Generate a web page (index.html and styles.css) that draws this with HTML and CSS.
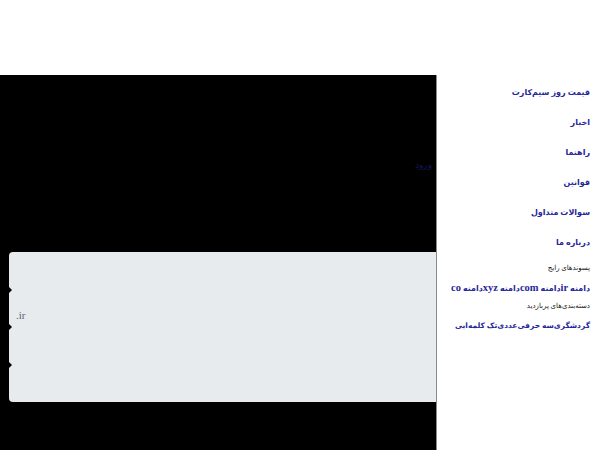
FILE: index.html
```html
<!DOCTYPE html>
<html lang="fa">
<head>
<meta charset="utf-8">
<link rel="stylesheet" href="styles.css">
</head>
<body>
<div class="top"></div>
<div class="layout">
  <div class="main">
    <div class="ghost">ورود</div>
    <div class="box">
      <div class="row"></div>
      <div class="row notch"><span class="ext">.ir</span></div>
      <div class="row notch"></div>
      <div class="row notch"></div>
    </div>
  </div>
  <aside class="side">
    <nav class="menu">
      <a class="link">قیمت روز سیم‌کارت</a>
      <a class="link">اخبار</a>
      <a class="link">راهنما</a>
      <a class="link">قوانین</a>
      <a class="link">سوالات متداول</a>
      <a class="link">درباره ما</a>
    </nav>
    <div class="group">
      <div class="label">پسوندهای رایج</div>
      <div class="tags">دامنه <span class="lat">ir</span>‌دامنه <span class="lat">com</span>‌دامنه <span class="lat">xyz</span>‌دامنه <span class="lat">co</span></div>
      <div class="label">دسته‌بندی‌های پربازدید</div>
      <div class="tags narrow">گردشگری‌سه حرفی‌عددی‌تک کلمه‌ایی</div>
    </div>
  </aside>
</div>
</body>
</html>
```
FILE: styles.css
```css
html, body {
  margin: 0;
  padding: 0;
  background: #ffffff;
  height: 450px;
  overflow: hidden;
}
.top {
  height: 75px;
}
.layout {
  display: flex;
  width: 600px;
  height: 375px;
}
.main {
  width: 437px;
  flex: none;
  background: #000000;
  border-right: 1px solid #8a8a8a;
  display: flex;
  flex-direction: column;
  padding-left: 9px;
  box-sizing: border-box;
}
.ghost {
  align-self: flex-end;
  margin-top: 85px;
  margin-right: 4px;
  height: 17px;
  font-family: "DejaVu Sans", sans-serif;
  font-size: 9px;
  color: #16165a;
  direction: rtl;
}
.box {
  margin-top: 75px;
  height: 150px;
  background: #e8ebee;
  border-radius: 4px 0 0 4px;
  display: flex;
  flex-direction: column;
}
.row {
  flex: 1;
  position: relative;
  display: flex;
  align-items: center;
  padding-left: 7px;
}
.notch::before {
  content: "";
  position: absolute;
  left: 0;
  top: -3px;
  border-top: 3px solid transparent;
  border-bottom: 3px solid transparent;
  border-left: 3px solid #000;
}
.ext {
  margin-top: 14px;
  font-family: "Liberation Serif", serif;
  font-size: 11px;
  color: #666666;
}
.side {
  flex: 1;
  min-width: 0;
  direction: rtl;
  padding-right: 10px;
  font-family: "Liberation Serif", "DejaVu Sans", serif;
}
.menu {
  display: flex;
  flex-direction: column;
  padding-top: 10px;
}
.link {
  height: 30px;
  line-height: 16px;
  font-size: 8px;
  font-weight: bold;
  color: #27279a;
}
.group {
  margin-top: -6px;
  display: flex;
  flex-direction: column;
}
.label {
  font-size: 7px;
  color: #111111;
  height: 19px;
  line-height: 19px;
}
.tags {
  font-size: 8px;
  font-weight: bold;
  color: #27279a;
  height: 19px;
  line-height: 19px;
  white-space: nowrap;
}
.lat {
  font-size: 10.5px;
}
.narrow {
  font-size: 7.5px;
}
```
